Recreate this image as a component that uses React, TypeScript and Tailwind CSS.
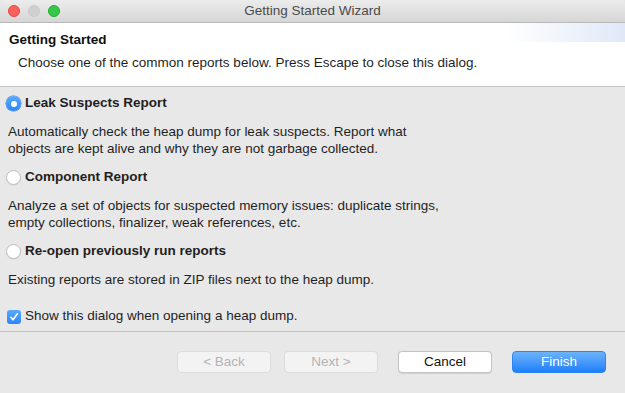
import React from "react";

const font = { fontFamily: '"Liberation Sans", Arial, sans-serif' };

function Radio({ checked }: { checked?: boolean }) {
  if (checked) {
    return (
      <span className="flex h-[15px] w-[15px] items-center justify-center rounded-full bg-gradient-to-b from-[#5aa9fd] to-[#2a86fb] shadow-[0_0_0_0.5px_#2a7de0]">
        <span className="h-[6px] w-[6px] rounded-full bg-white" />
      </span>
    );
  }
  return (
    <span className="h-[15px] w-[15px] rounded-full border border-[#bdbdbd] bg-white shadow-[0_0.5px_1px_rgba(0,0,0,0.08)]" />
  );
}

function Option({ label, checked }: { label: string; checked?: boolean }) {
  return (
    <div className="flex h-[17px] items-center gap-[4px] pl-[6px]">
      <Radio checked={checked} />
      <span className="text-[13.5px] font-bold text-[#1f1f1f]">{label}</span>
    </div>
  );
}

function Desc({ children }: { children: React.ReactNode }) {
  return <p className="pl-[8px] text-[13.5px] leading-[17px] text-[#1f1f1f]">{children}</p>;
}

export default function App() {
  return (
    <div className="flex h-[393px] w-[625px] flex-col overflow-hidden bg-[#e8e8e8]" style={font}>
      {/* title bar */}
      <div className="relative flex h-[23px] shrink-0 items-center justify-center rounded-t-[5px] border-b border-[#b8b8b8] bg-gradient-to-b from-[#ececec] to-[#d6d6d6]">
        <div className="absolute left-[8px] top-[5px] flex gap-[8px]">
          <span className="h-[12px] w-[12px] rounded-full border border-[#e2463f] bg-[#fc605c]" />
          <span className="h-[12px] w-[12px] rounded-full border border-[#c8c8c8] bg-[#d0d0d0]" />
          <span className="h-[12px] w-[12px] rounded-full border border-[#1dad2b] bg-[#34c84a]" />
        </div>
        <span className="text-[13.5px] text-[#4b4b4b]">Getting Started Wizard</span>
      </div>

      {/* header */}
      <div className="relative h-[64px] shrink-0 border-b border-[#c4c4c4] bg-white">
        <div className="absolute right-0 top-0 h-[19px] w-[120px] bg-gradient-to-r from-white to-[#e0e8f8]" />
        <div className="relative pl-[9px] pt-[8px] text-[13.5px] font-bold leading-[17px] text-[#111]">Getting Started</div>
        <div className="relative pl-[18px] pt-[6px] text-[13.5px] leading-[17px] text-[#1f1f1f]">
          Choose one of the common reports below. Press Escape to close this dialog.
        </div>
      </div>

      {/* body */}
      <div className="flex h-[245px] shrink-0 flex-col border-b border-[#c2c2c2] pt-[8px]">
        <Option label="Leak Suspects Report" checked />
        <div className="mt-[11px]">
          <Desc>
            Automatically check the heap dump for leak suspects. Report what
            <br />
            objects are kept alive and why they are not garbage collected.
          </Desc>
        </div>
        <div className="mt-[12px]">
          <Option label="Component Report" />
        </div>
        <div className="mt-[11px]">
          <Desc>
            Analyze a set of objects for suspected memory issues: duplicate strings,
            <br />
            empty collections, finalizer, weak references, etc.
          </Desc>
        </div>
        <div className="mt-[12px]">
          <Option label="Re-open previously run reports" />
        </div>
        <div className="mt-[11px]">
          <Desc>Existing reports are stored in ZIP files next to the heap dump.</Desc>
        </div>
        <div className="mt-[20px] flex h-[17px] items-center gap-[4px] pl-[7px]">
          <span className="flex h-[14px] w-[14px] items-center justify-center rounded-[3px] bg-gradient-to-b from-[#5aa9fd] to-[#2a86fb]">
            <svg width="10" height="10" viewBox="0 0 10 10" fill="none">
              <path d="M1.8 5.3 L4 7.8 L8.4 1.8" stroke="white" strokeWidth="1.6" strokeLinecap="round" strokeLinejoin="round" />
            </svg>
          </span>
          <span className="text-[13.5px] text-[#1f1f1f]">Show this dialog when opening a heap dump.</span>
        </div>
      </div>

      {/* footer */}
      <div className="flex flex-1 items-start justify-end pr-[19px] pt-[19px]">
        <div className="flex items-center">
          <button className="h-[22px] w-[94px] rounded-[4px] border border-[#dcdcdc] bg-[#f3f3f3] text-[13.5px] text-[#b3b3b3]">
            &lt; Back
          </button>
          <button className="ml-[13px] h-[22px] w-[94px] rounded-[4px] border border-[#dcdcdc] bg-[#f3f3f3] text-[13.5px] text-[#b3b3b3]">
            Next &gt;
          </button>
          <button className="ml-[20px] h-[22px] w-[94px] rounded-[4px] border border-[#c3c3c3] bg-white text-[13.5px] text-[#111] shadow-[0_0.5px_1px_rgba(0,0,0,0.1)]">
            Cancel
          </button>
          <button className="ml-[20px] h-[22px] w-[94px] rounded-[4px] border border-[#2d83f0] bg-gradient-to-b from-[#6cb3fa] to-[#1b7ffb] text-[13.5px] text-white">
            Finish
          </button>
        </div>
      </div>
    </div>
  );
}
